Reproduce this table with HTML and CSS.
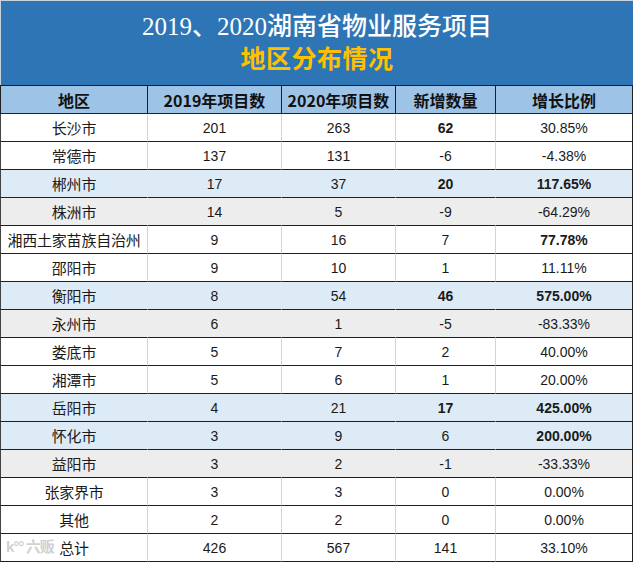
FILE: index.html
```html
<!DOCTYPE html>
<html lang="zh-CN">
<head>
<meta charset="utf-8">
<title>2019、2020湖南省物业服务项目地区分布情况</title>
<link rel="stylesheet" href="styles.css">
</head>
<body>
<div class="sheet">
  <div class="title">
    <div class="t1">2019、2020湖南省物业服务项目</div>
    <div class="t2">地区分布情况</div>
  </div>
  <table class="grid">
    <thead>
      <tr><th class="c1">地区</th><th class="c2">2019年项目数</th><th class="c3">2020年项目数</th><th class="c4">新增数量</th><th class="c5">增长比例</th></tr>
    </thead>
    <tbody>
      <tr><td class="name">长沙市</td><td>201</td><td>263</td><td class="b">62</td><td>30.85%</td></tr>
      <tr><td class="name">常德市</td><td>137</td><td>131</td><td>-6</td><td>-4.38%</td></tr>
      <tr class="blue"><td class="name">郴州市</td><td>17</td><td>37</td><td class="b">20</td><td class="b">117.65%</td></tr>
      <tr class="gray"><td class="name">株洲市</td><td>14</td><td>5</td><td>-9</td><td>-64.29%</td></tr>
      <tr><td class="name">湘西土家苗族自治州</td><td>9</td><td>16</td><td>7</td><td class="b">77.78%</td></tr>
      <tr><td class="name">邵阳市</td><td>9</td><td>10</td><td>1</td><td>11.11%</td></tr>
      <tr class="blue"><td class="name">衡阳市</td><td>8</td><td>54</td><td class="b">46</td><td class="b">575.00%</td></tr>
      <tr class="gray"><td class="name">永州市</td><td>6</td><td>1</td><td>-5</td><td>-83.33%</td></tr>
      <tr><td class="name">娄底市</td><td>5</td><td>7</td><td>2</td><td>40.00%</td></tr>
      <tr><td class="name">湘潭市</td><td>5</td><td>6</td><td>1</td><td>20.00%</td></tr>
      <tr class="blue"><td class="name">岳阳市</td><td>4</td><td>21</td><td class="b">17</td><td class="b">425.00%</td></tr>
      <tr class="blue"><td class="name">怀化市</td><td>3</td><td>9</td><td>6</td><td class="b">200.00%</td></tr>
      <tr class="gray"><td class="name">益阳市</td><td>3</td><td>2</td><td>-1</td><td>-33.33%</td></tr>
      <tr><td class="name">张家界市</td><td>3</td><td>3</td><td>0</td><td>0.00%</td></tr>
      <tr><td class="name">其他</td><td>2</td><td>2</td><td>0</td><td>0.00%</td></tr>
      <tr><td class="name">总计</td><td>426</td><td>567</td><td>141</td><td>33.10%</td></tr>
    </tbody>
  </table>
  <div class="mark"><span class="mark-logo">k°°</span> 六贩</div>
</div>
</body>
</html>
```

FILE: styles.css
```css
html, body {
  margin: 0;
  padding: 0;
  background: #ffffff;
}

.sheet {
  position: relative;
  width: 633px;
}

.title {
  box-sizing: border-box;
  height: 85px;
  background: #2e75b6;
  border-top: 1px solid #c9d3dd;
  border-left: 1px solid #c9d3dd;
  display: flex;
  flex-direction: column;
  align-items: center;
  justify-content: center;
  gap: 2px;
  padding-bottom: 2px;
}

.t1 {
  color: #ffffff;
  font-family: "Liberation Serif", "Noto Sans CJK SC", serif;
  font-size: 25px;
  line-height: 28px;
  font-weight: 500;
}

.t2 {
  color: #ffc000;
  font-family: "Noto Sans CJK SC", sans-serif;
  font-size: 25px;
  line-height: 28px;
  font-weight: 700;
  letter-spacing: 0.5px;
}

.grid {
  border-collapse: separate;
  border-spacing: 0;
  table-layout: fixed;
  width: 633px;
}

.grid th,
.grid td {
  box-sizing: border-box;
  height: 28px;
  padding: 0;
  text-align: center;
  vertical-align: middle;
  border-bottom: 1px solid #1f1f1f;
  white-space: nowrap;
}

.grid th {
  background: #9dc3e6;
  border-top: 1px solid #1f1f1f;
  border-right: 1px solid #1f1f1f;
  height: 29px;
  font-family: "Noto Sans CJK SC", sans-serif;
  font-weight: 700;
  font-size: 16px;
  color: #111111;
  padding-top: 1px;
}

.grid th.c1 { width: 148px; border-left: 1px solid #1f1f1f; }
.grid th.c2 { width: 134px; }
.grid th.c3 { width: 114px; }
.grid th.c4 { width: 100px; }
.grid th.c5 { width: 137px; }

.grid td {
  font-family: "Liberation Sans", "Noto Sans CJK SC", sans-serif;
  font-size: 14px;
  color: #1a1a1a;
  border-right: 1px solid #d4d4d4;
  background: #ffffff;
}

.grid td:first-child {
  border-left: 1px solid #444444;
}

.grid td:last-child {
  border-right: 1px solid #1f1f1f;
}

.grid td.name {
  font-family: "Noto Sans CJK SC", sans-serif;
  font-size: 15px;
  font-weight: 400;
  letter-spacing: -0.2px;
}

.grid td.b {
  font-weight: 700;
}

.grid tr.blue td {
  background: #ddebf7;
  border-right-color: #ddebf7;
}

.grid tr.gray td {
  background: #ededed;
  border-right-color: #ededed;
}

.grid tr.blue td:last-child,
.grid tr.gray td:last-child {
  border-right-color: #1f1f1f;
}

.mark {
  position: absolute;
  left: 6px;
  bottom: 6px;
  font-family: "Noto Sans CJK SC", sans-serif;
  font-size: 15px;
  font-weight: 700;
  color: rgba(200, 200, 200, 0.85);
  text-shadow: 0 0 1px #ffffff, 1px 1px 0 rgba(255,255,255,0.9);
  letter-spacing: -1px;
  line-height: 18px;
}

.mark-logo {
  font-family: "Liberation Sans", sans-serif;
  font-size: 15px;
}
```
